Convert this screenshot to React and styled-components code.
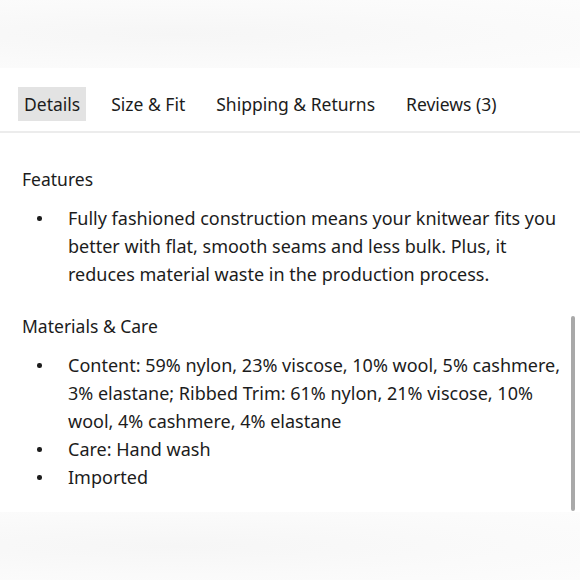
import styled, { createGlobalStyle } from "styled-components";

const GlobalStyle = createGlobalStyle`
  html, body {
    margin: 0;
    padding: 0;
    background: #ffffff;
  }
  body {
    font-family: "Noto Sans", "Liberation Sans", sans-serif;
    color: #1c1c1c;
  }
`;

const tabs = ["Details", "Size & Fit", "Shipping & Returns", "Reviews (3)"];

// lines are kept as in the product page so the wraps fall in the same places
const sections = [
  {
    title: "Features",
    items: [
      [
        "Fully fashioned construction means your knitwear fits you",
        "better with flat, smooth seams and less bulk. Plus, it",
        "reduces material waste in the production process.",
      ],
    ],
  },
  {
    title: "Materials & Care",
    items: [
      [
        "Content: 59% nylon, 23% viscose, 10% wool, 5% cashmere,",
        "3% elastane; Ribbed Trim: 61% nylon, 21% viscose, 10%",
        "wool, 4% cashmere, 4% elastane",
      ],
      ["Care: Hand wash"],
      ["Imported"],
    ],
  },
];

export default function App() {
  return (
    <>
      <GlobalStyle />
      <Styled.Page>
        <Styled.Band />
        <Styled.Panel>
          <Styled.TabBar>
            {tabs.map((t, i) => (
              <Styled.Tab key={t} active={i === 0}>
                {t}
              </Styled.Tab>
            ))}
          </Styled.TabBar>
          <Styled.Content>
            {sections.map((s) => (
              <Styled.Section key={s.title}>
                <Styled.Heading>{s.title}</Styled.Heading>
                <Styled.List>
                  {s.items.map((lines) => (
                    <Styled.Item key={lines[0]}>
                      {lines.map((l) => (
                        <Styled.Line key={l}>{l}</Styled.Line>
                      ))}
                    </Styled.Item>
                  ))}
                </Styled.List>
              </Styled.Section>
            ))}
          </Styled.Content>
          <Styled.ScrollThumb />
        </Styled.Panel>
        <Styled.Band grow />
      </Styled.Page>
    </>
  );
}

const Styled = {
  Page: styled.div`
    width: 580px;
    height: 580px;
    display: flex;
    flex-direction: column;
    overflow: hidden;
  `,

  Band: styled.div`
    height: 68px;
    flex: ${({ grow }) => (grow ? 1 : "none")};
    background: radial-gradient(ellipse at 30% 50%, #f6f6f6 0%, #fafafa 60%, #fcfcfc 100%);
  `,

  Panel: styled.div`
    position: relative;
    height: 444px;
    background: #ffffff;
    display: flex;
    flex-direction: column;
  `,

  TabBar: styled.div`
    display: flex;
    align-items: center;
    gap: 19px;
    padding: 19px 0 10px 18px;
    border-bottom: 2px solid #ececec;
  `,

  Tab: styled.div`
    height: 34px;
    display: flex;
    align-items: center;
    padding: 0 6px;
    font-size: 17.5px;
    color: #1c1c1c;
    white-space: nowrap;
    background: ${({ active }) => (active ? "#e3e3e3" : "transparent")};
  `,

  Content: styled.div`
    padding: 32px 22px 0;
    display: flex;
    flex-direction: column;
    gap: 24px;
  `,

  Section: styled.div`
    display: flex;
    flex-direction: column;
    gap: 11px;
  `,

  Heading: styled.div`
    font-size: 17.5px;
    line-height: 28px;
  `,

  List: styled.ul`
    margin: 0;
    padding: 0;
    list-style: none;
    font-size: 18px;
    line-height: 28px;
  `,

  Item: styled.li`
    position: relative;
    padding-left: 46px;

    &::before {
      content: "";
      position: absolute;
      left: 15px;
      top: 12px;
      width: 4.5px;
      height: 4.5px;
      border-radius: 50%;
      background: #1c1c1c;
    }
  `,

  Line: styled.span`
    display: block;
    white-space: nowrap;
  `,

  ScrollThumb: styled.div`
    position: absolute;
    right: 5px;
    top: 248px;
    bottom: 1px;
    width: 4px;
    border-radius: 2px;
    background: #a9a9a9;
  `,
};
